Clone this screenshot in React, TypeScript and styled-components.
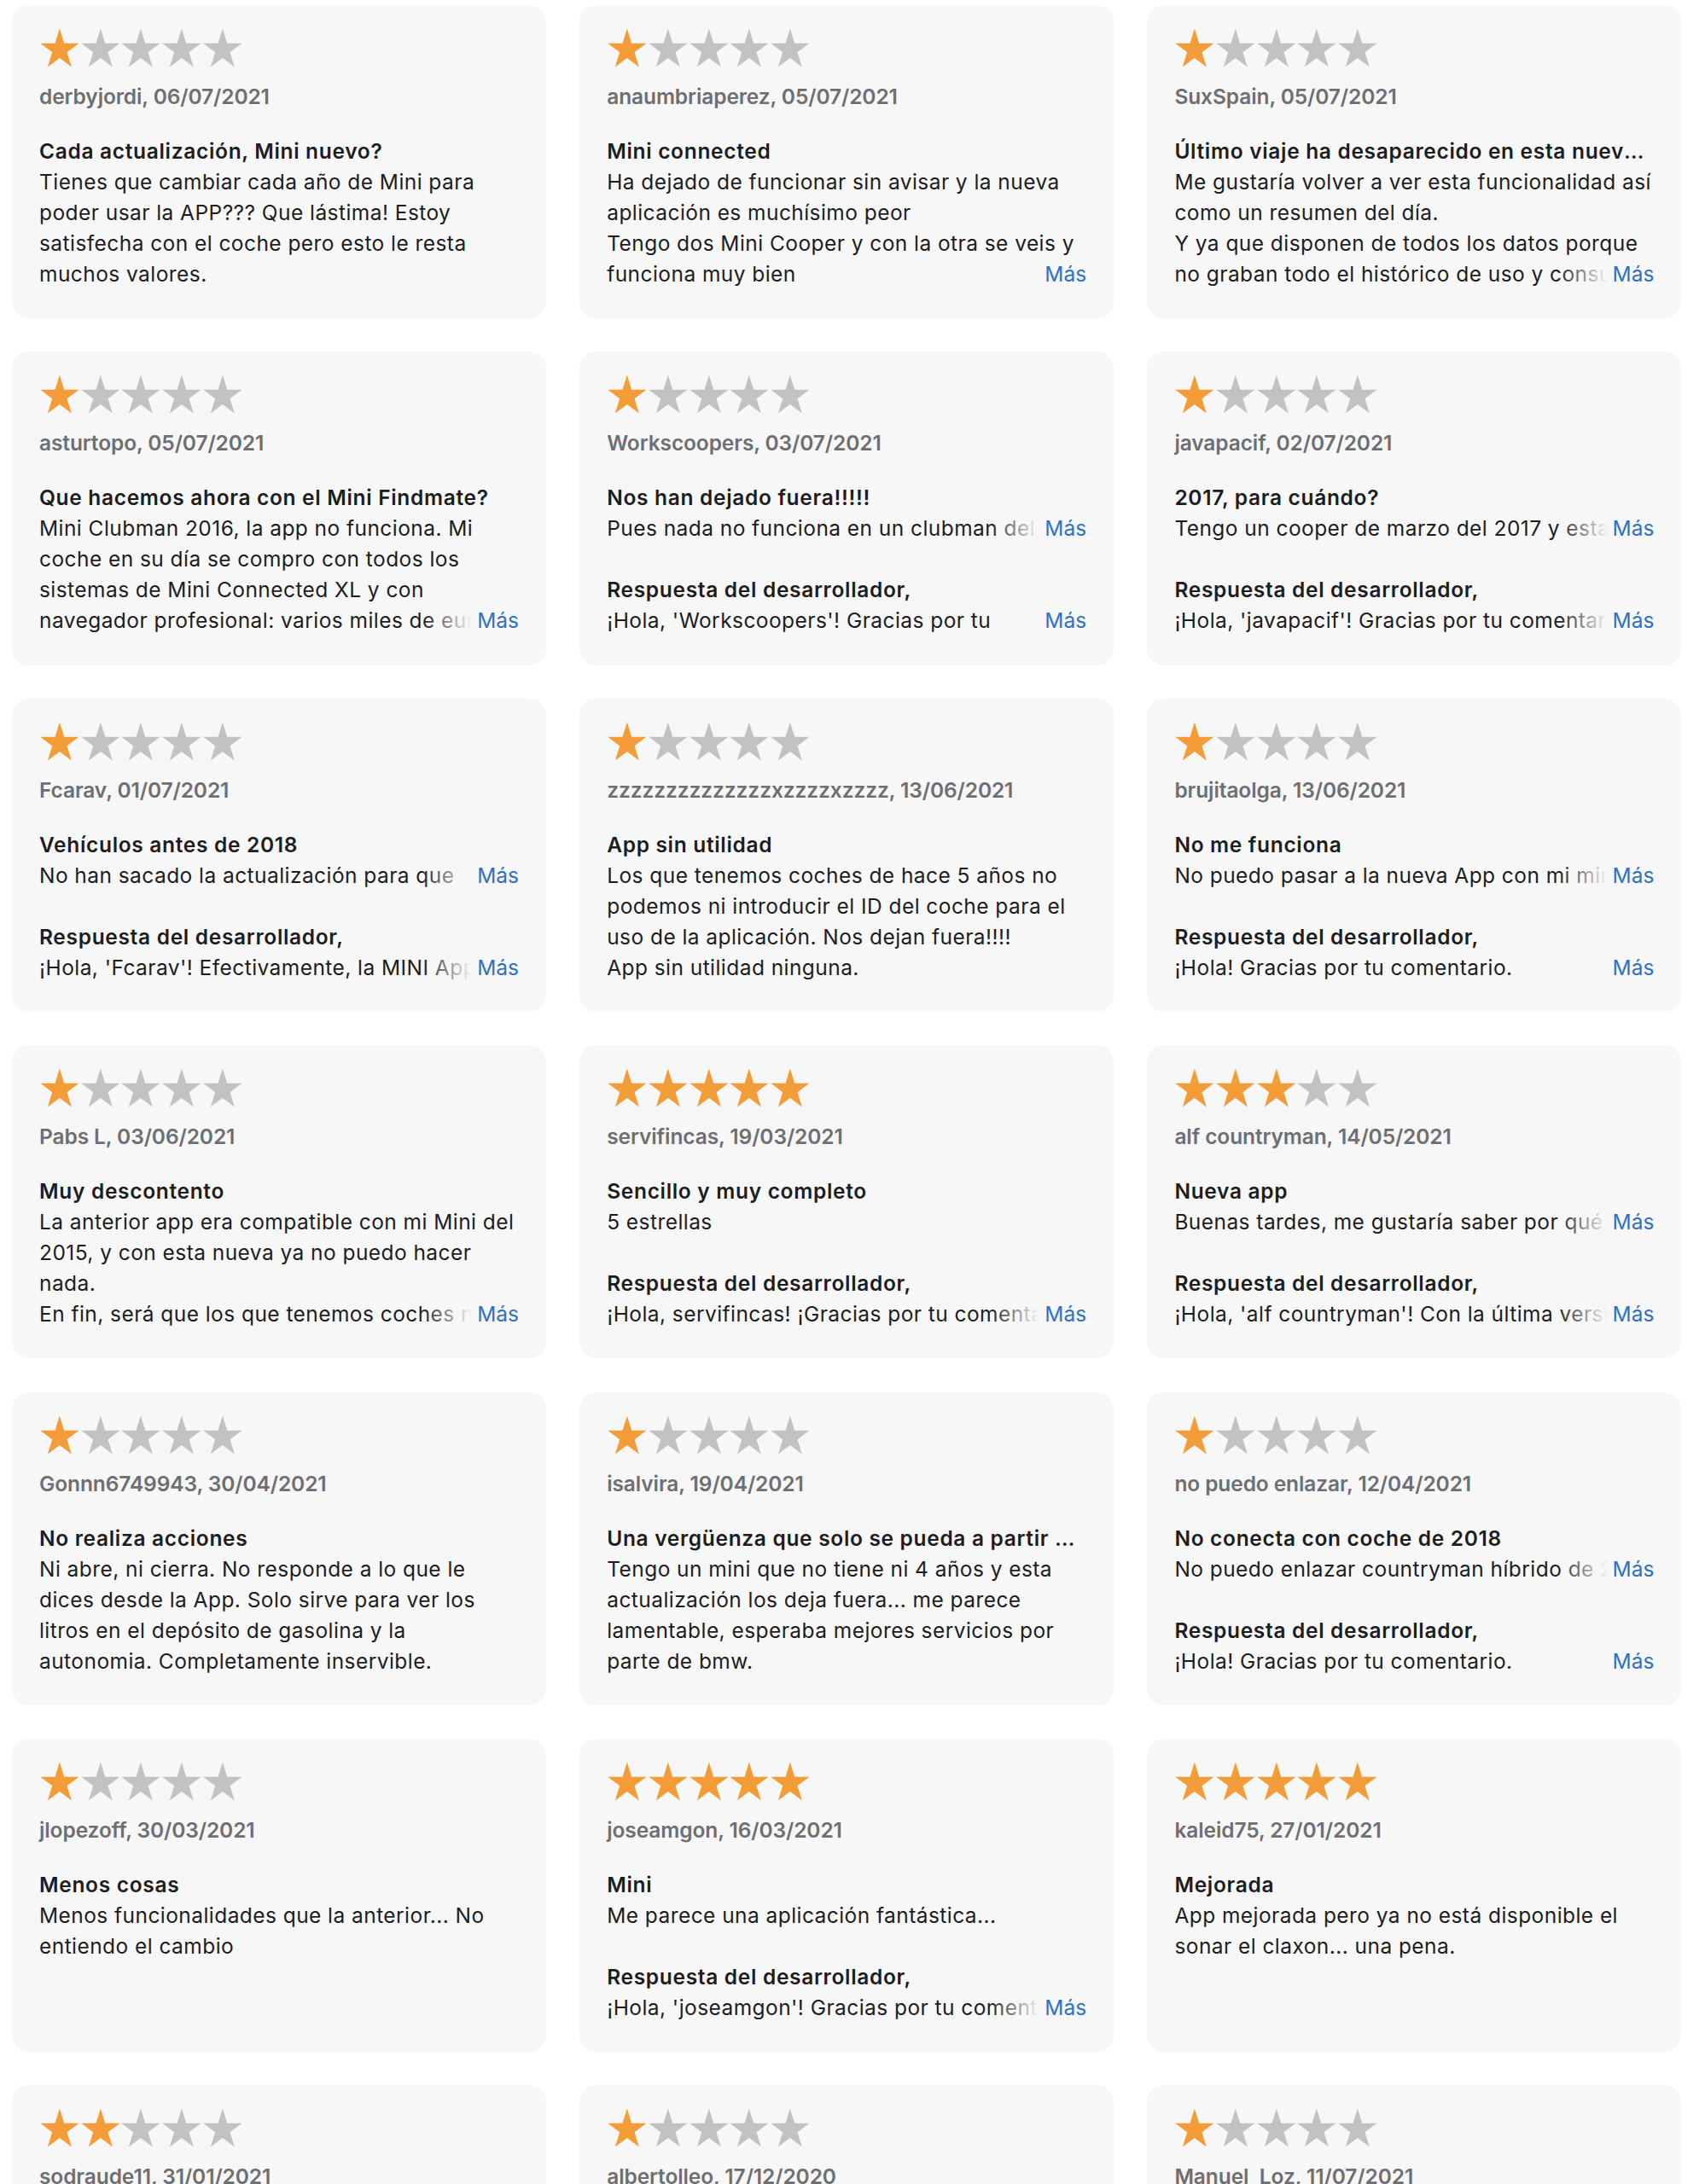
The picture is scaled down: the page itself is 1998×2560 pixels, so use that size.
import React from 'react';
import styled, { createGlobalStyle } from 'styled-components';

const GlobalStyle = createGlobalStyle`
  html, body { margin: 0; padding: 0; background: #ffffff; }
  body { font-family: Inter, "Noto Sans", sans-serif; -webkit-font-smoothing: antialiased; }
`;

type Review = {
  rating: number;
  user: string;
  title: string;
  lines: string[];
  more?: boolean;
  reply?: string;
  replyMore?: boolean;
};

const reviews: Review[] = [
  { rating: 1, user: 'derbyjordi, 06/07/2021', title: 'Cada actualización, Mini nuevo?', lines: ['Tienes que cambiar cada año de Mini para', 'poder usar la APP??? Que lástima! Estoy', 'satisfecha con el coche pero esto le resta', 'muchos valores.'] },
  { rating: 1, user: 'anaumbriaperez, 05/07/2021', title: 'Mini connected', lines: ['Ha dejado de funcionar sin avisar y la nueva', 'aplicación es muchísimo peor', 'Tengo dos Mini Cooper y con la otra se veis y', 'funciona muy bien'], more: true },
  { rating: 1, user: 'SuxSpain, 05/07/2021', title: 'Último viaje ha desaparecido en esta nueva versión', lines: ['Me gustaría volver a ver esta funcionalidad así', 'como un resumen del día.', 'Y ya que disponen de todos los datos porque', 'no graban todo el histórico de uso y consumo'], more: true },
  { rating: 1, user: 'asturtopo, 05/07/2021', title: 'Que hacemos ahora con el Mini Findmate?', lines: ['Mini Clubman 2016, la app no funciona. Mi', 'coche en su día se compro con todos los', 'sistemas de Mini Connected XL y con', 'navegador profesional: varios miles de euros'], more: true },
  { rating: 1, user: 'Workscoopers, 03/07/2021', title: 'Nos han dejado fuera!!!!!', lines: ['Pues nada no funciona en un clubman del'], more: true, reply: "¡Hola, 'Workscoopers'! Gracias por tu", replyMore: true },
  { rating: 1, user: 'javapacif, 02/07/2021', title: '2017, para cuándo?', lines: ['Tengo un cooper de marzo del 2017 y esta'], more: true, reply: "¡Hola, 'javapacif'! Gracias por tu comentario", replyMore: true },
  { rating: 1, user: 'Fcarav, 01/07/2021', title: 'Vehículos antes de 2018', lines: ['No han sacado la actualización para que'], more: true, reply: "¡Hola, 'Fcarav'! Efectivamente, la MINI App", replyMore: true },
  { rating: 1, user: 'zzzzzzzzzzzzzzxzzzzxzzzz, 13/06/2021', title: 'App sin utilidad', lines: ['Los que tenemos coches de hace 5 años no', 'podemos ni introducir el ID del coche para el', 'uso de la aplicación. Nos dejan fuera!!!!', 'App sin utilidad ninguna.'] },
  { rating: 1, user: 'brujitaolga, 13/06/2021', title: 'No me funciona', lines: ['No puedo pasar a la nueva App con mi mini'], more: true, reply: '¡Hola! Gracias por tu comentario.', replyMore: true },
  { rating: 1, user: 'Pabs L, 03/06/2021', title: 'Muy descontento', lines: ['La anterior app era compatible con mi Mini del', '2015, y con esta nueva ya no puedo hacer', 'nada.', 'En fin, será que los que tenemos coches no'], more: true },
  { rating: 5, user: 'servifincas, 19/03/2021', title: 'Sencillo y muy completo', lines: ['5 estrellas'], reply: '¡Hola, servifincas! ¡Gracias por tu comentario', replyMore: true },
  { rating: 3, user: 'alf countryman, 14/05/2021', title: 'Nueva app', lines: ['Buenas tardes, me gustaría saber por qué'], more: true, reply: "¡Hola, 'alf countryman'! Con la última versión", replyMore: true },
  { rating: 1, user: 'Gonnn6749943, 30/04/2021', title: 'No realiza acciones', lines: ['Ni abre, ni cierra. No responde a lo que le', 'dices desde la App. Solo sirve para ver los', 'litros en el depósito de gasolina y la', 'autonomia. Completamente inservible.'] },
  { rating: 1, user: 'isalvira, 19/04/2021', title: 'Una vergüenza que solo se pueda a partir de 2018', lines: ['Tengo un mini que no tiene ni 4 años y esta', 'actualización los deja fuera... me parece', 'lamentable, esperaba mejores servicios por', 'parte de bmw.'] },
  { rating: 1, user: 'no puedo enlazar, 12/04/2021', title: 'No conecta con coche de 2018', lines: ['No puedo enlazar countryman híbrido de 2018'], more: true, reply: '¡Hola! Gracias por tu comentario.', replyMore: true },
  { rating: 1, user: 'jlopezoff, 30/03/2021', title: 'Menos cosas', lines: ['Menos funcionalidades que la anterior... No', 'entiendo el cambio'] },
  { rating: 5, user: 'joseamgon, 16/03/2021', title: 'Mini', lines: ['Me parece una aplicación fantástica...'], reply: "¡Hola, 'joseamgon'! Gracias por tu comentario", replyMore: true },
  { rating: 5, user: 'kaleid75, 27/01/2021', title: 'Mejorada', lines: ['App mejorada pero ya no está disponible el', 'sonar el claxon... una pena.'] },
  { rating: 2, user: 'sodraude11, 31/01/2021', title: 'Nueva versión', lines: ['No funciona con mi coche.'] },
  { rating: 1, user: 'albertolleo, 17/12/2020', title: 'No funciona', lines: ['No puedo conectar mi coche.'] },
  { rating: 1, user: 'Manuel_Loz, 11/07/2021', title: 'Decepcionante', lines: ['La app no reconoce mi Mini.'] },
];

const Grid = styled.main`
  display: grid;
  grid-template-columns: repeat(3, 626px);
  column-gap: 39.2px;
  row-gap: 39.2px;
  padding: 6px 0 40px 14px;
`;

const Card = styled.article`
  box-sizing: border-box;
  height: 367.2px;
  padding: 27px 32px 0;
  background: #f7f7f7;
  border-radius: 20px;
  overflow: hidden;
`;

const Stars = styled.div`
  display: flex;
  height: 46px;
`;

const StarIcon = styled.svg<{ $on: boolean }>`
  flex: none;
  width: 47.7px;
  height: 46px;
  fill: ${(p) => (p.$on ? '#f49d38' : '#c2c2c2')};
`;

const User = styled.div`
  margin-top: 18px;
  font-size: 24.5px;
  line-height: 32px;
  font-weight: 600;
  letter-spacing: -0.1px;
  color: #6e6e73;
  white-space: nowrap;
`;

const Title = styled.h3`
  margin: 30px 0 0;
  font-size: 24.5px;
  line-height: 36px;
  font-weight: 600;
  letter-spacing: 0.68px;
  color: #1d1d1f;
  white-space: nowrap;
  overflow: hidden;
  text-overflow: ellipsis;
`;

const Body = styled.div`
  position: relative;
  font-size: 24.5px;
  line-height: 36px;
  letter-spacing: 0.44px;
  color: #1d1d1f;
`;

const Line = styled.div`
  white-space: nowrap;
  overflow: hidden;
`;

const More = styled.span`
  position: absolute;
  right: 0;
  bottom: 0;
  padding-left: 64px;
  letter-spacing: 0;
  background: linear-gradient(to right, rgba(247, 247, 247, 0) 0, #f7f7f7 58px);
  color: #3071c8;
`;

const Reply = styled.section`
  margin-top: 36px;
`;

const ReplyTitle = styled.div`
  font-size: 24.5px;
  line-height: 36px;
  font-weight: 600;
  letter-spacing: 0.68px;
  color: #1d1d1f;
`;

const STAR = 'M24 0.5 L29.39 17.08 L46.83 17.08 L32.72 27.33 L38.11 43.92 L24 33.67 L9.89 43.92 L15.28 27.33 L1.17 17.08 L18.61 17.08 Z';

function Rating({ value }: { value: number }) {
  return (
    <Stars aria-label={`${value} de 5`}>
      {[0, 1, 2, 3, 4].map((i) => (
        <StarIcon key={i} $on={i < value} viewBox="0 0 48 44.4" preserveAspectRatio="none">
          <path d={STAR} />
        </StarIcon>
      ))}
    </Stars>
  );
}

function ReviewCard({ r }: { r: Review }) {
  return (
    <Card>
      <Rating value={r.rating} />
      <User>{r.user}</User>
      <Title>{r.title}</Title>
      <Body>
        {r.lines.map((l, i) => (
          <Line key={i}>{l}</Line>
        ))}
        {r.more && <More>Más</More>}
      </Body>
      {r.reply && (
        <Reply>
          <ReplyTitle>Respuesta del desarrollador,</ReplyTitle>
          <Body>
            <Line>{r.reply}</Line>
            {r.replyMore && <More>Más</More>}
          </Body>
        </Reply>
      )}
    </Card>
  );
}

export default function App() {
  return (
    <>
      <GlobalStyle />
      <Grid>
        {reviews.map((r, i) => (
          <ReviewCard key={i} r={r} />
        ))}
      </Grid>
    </>
  );
}
